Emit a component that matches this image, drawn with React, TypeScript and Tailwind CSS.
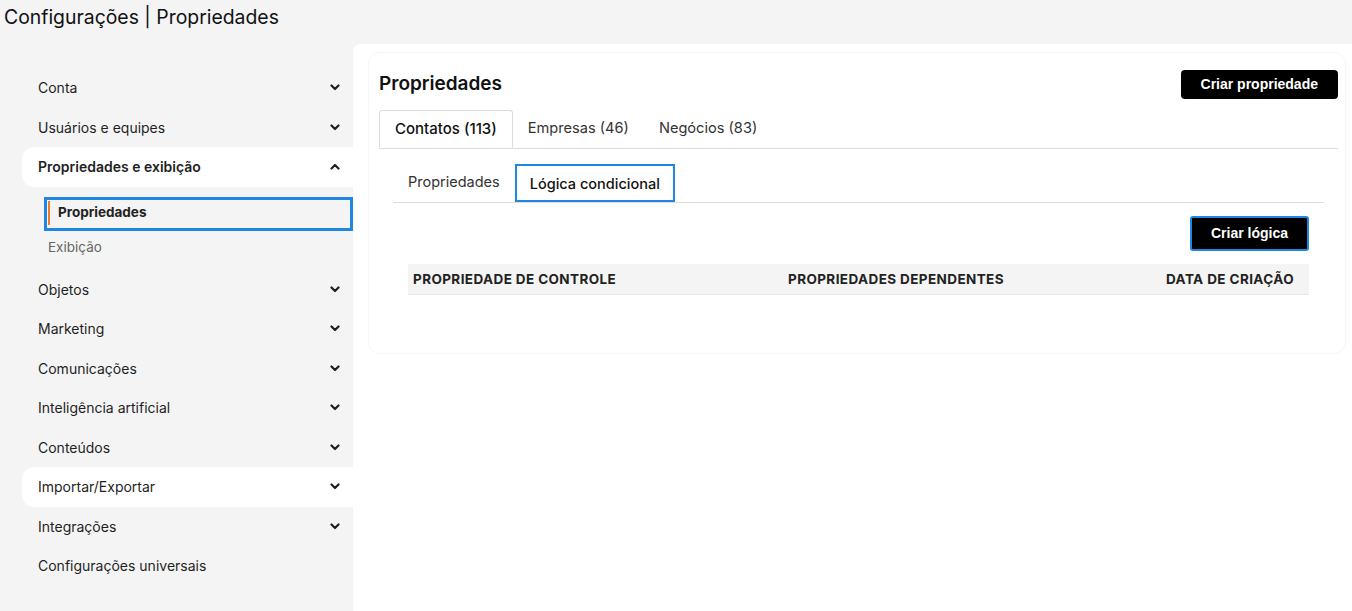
import { ReactNode } from "react";

function Chevron({ up = false }: { up?: boolean }) {
  return (
    <svg width="10" height="7" viewBox="0 0 10 7" className="shrink-0">
      <path
        d={up ? "M1.5 5.5 L5 2 L8.5 5.5" : "M1.5 1.5 L5 5 L8.5 1.5"}
        fill="none"
        stroke="#1f1f1f"
        strokeWidth="2.2"
        strokeLinecap="round"
        strokeLinejoin="round"
      />
    </svg>
  );
}

function NavItem({
  label,
  chevron = true,
  active = false,
  highlight = false,
  up = false,
}: {
  label: string;
  chevron?: boolean;
  active?: boolean;
  highlight?: boolean;
  up?: boolean;
}) {
  return (
    <div
      className={`flex items-center justify-between h-[39.5px] pl-4 pr-[13px] rounded-l-xl ${
        highlight ? "bg-white" : ""
      }`}
    >
      <span
        className={`text-[14px] text-[#1f1f1f] ${active ? "font-semibold" : ""}`}
      >
        {label}
      </span>
      {chevron && <Chevron up={up} />}
    </div>
  );
}

function Tab({ children, active }: { children: ReactNode; active?: boolean }) {
  return (
    <div
      className={`h-[38px] px-[15px] flex items-center ${
        active
          ? "text-[15px] bg-white border border-[#dcdcdc] border-b-white -mb-px rounded-t-[3px] font-medium text-[#111]"
          : "text-[14.6px] text-[#333]"
      }`}
    >
      {children}
    </div>
  );
}

export default function App() {
  return (
    <div
      className="bg-[#f4f4f4] min-h-[611px] flex flex-col"
      style={{ fontFamily: "Inter, 'Noto Sans', sans-serif" }}
    >
      <div className="h-[44px] px-1 flex items-start pt-[3px]">
        <h1 className="text-[19.4px] text-[#111] leading-[28px]">
          Configurações | Propriedades
        </h1>
      </div>

      <div className="flex flex-1">
        {/* sidebar */}
        <aside className="w-[353px] shrink-0 pl-[22px] pt-[24px]">
          <NavItem label="Conta" />
          <NavItem label="Usuários e equipes" />
          <NavItem label="Propriedades e exibição" active highlight up />
          <div className="pl-[22px] pt-[10px]">
            <div className="h-[34px] border-[3px] border-[#1f87e0] flex items-center pl-[1px] pb-[2px]">
              <div className="w-[2px] h-[24px] bg-[#f07b2a]" />
              <span className="ml-[8px] text-[13.5px] font-bold text-[#222]">
                Propriedades
              </span>
            </div>
            <div className="h-[33px] flex items-center pl-1 text-[13.5px] text-[#666]">
              Exibição
            </div>
          </div>
          <div className="pt-[6px]">
            <NavItem label="Objetos" />
            <NavItem label="Marketing" />
            <NavItem label="Comunicações" />
            <NavItem label="Inteligência artificial" />
            <NavItem label="Conteúdos" />
            <NavItem label="Importar/Exportar" highlight />
            <NavItem label="Integrações" />
            <NavItem label="Configurações universais" chevron={false} />
          </div>
        </aside>

        {/* main */}
        <main className="flex-1 bg-white rounded-tl-lg pt-[8px] pl-[15px] pr-[6px]">
          <div className="border border-[#f6f6f6] rounded-xl pl-[10px] pr-[7px] pt-[16px] pb-[58px]">
            <div className="flex items-center justify-between h-[30px]">
              <h2 className="text-[19px] font-semibold text-[#111]">
                Propriedades
              </h2>
              <button
                className="h-[29px] px-[20px] bg-black text-white rounded-[4px] text-[14px] font-bold"
                style={{ fontFamily: "'Liberation Sans', Arial, sans-serif" }}
              >
                Criar propriedade
              </button>
            </div>

            <div className="mt-[11px] flex border-b border-[#dcdcdc]">
              <Tab active>Contatos (113)</Tab>
              <Tab>Empresas (46)</Tab>
              <Tab>Negócios (83)</Tab>
            </div>

            <div className="px-[14px] pt-[15px]">
              <div className="flex items-end border-b border-[#dcdcdc]">
                <div className="h-[38px] px-[15px] flex items-center text-[14.5px] text-[#333] pb-[2px]">
                  Propriedades
                </div>
                <div className="h-[38px] px-[13px] flex items-center border-2 border-[#1f87e0] text-[14.5px] font-medium text-[#111] pt-[2px]">
                  Lógica condicional
                </div>
              </div>

              <div className="px-[15px]">
                <div className="flex justify-end pt-[13px]">
                  <button
                    className="h-[35px] px-[19px] bg-black text-white rounded-[3px] text-[14px] font-bold border-2 border-[#1f87e0]"
                    style={{ fontFamily: "'Liberation Sans', Arial, sans-serif" }}
                  >
                    Criar lógica
                  </button>
                </div>

                <div className="mt-[13px] h-[31px] bg-[#f4f4f4] border-b border-[#e6e6e6] grid grid-cols-[375px_1fr_auto] items-center px-[5px] pr-[15px] text-[13.5px] font-bold tracking-[0.4px] text-[#222]">
                  <span>PROPRIEDADE DE CONTROLE</span>
                  <span>PROPRIEDADES DEPENDENTES</span>
                  <span>DATA DE CRIAÇÃO</span>
                </div>
              </div>
            </div>
          </div>
        </main>
      </div>
    </div>
  );
}
